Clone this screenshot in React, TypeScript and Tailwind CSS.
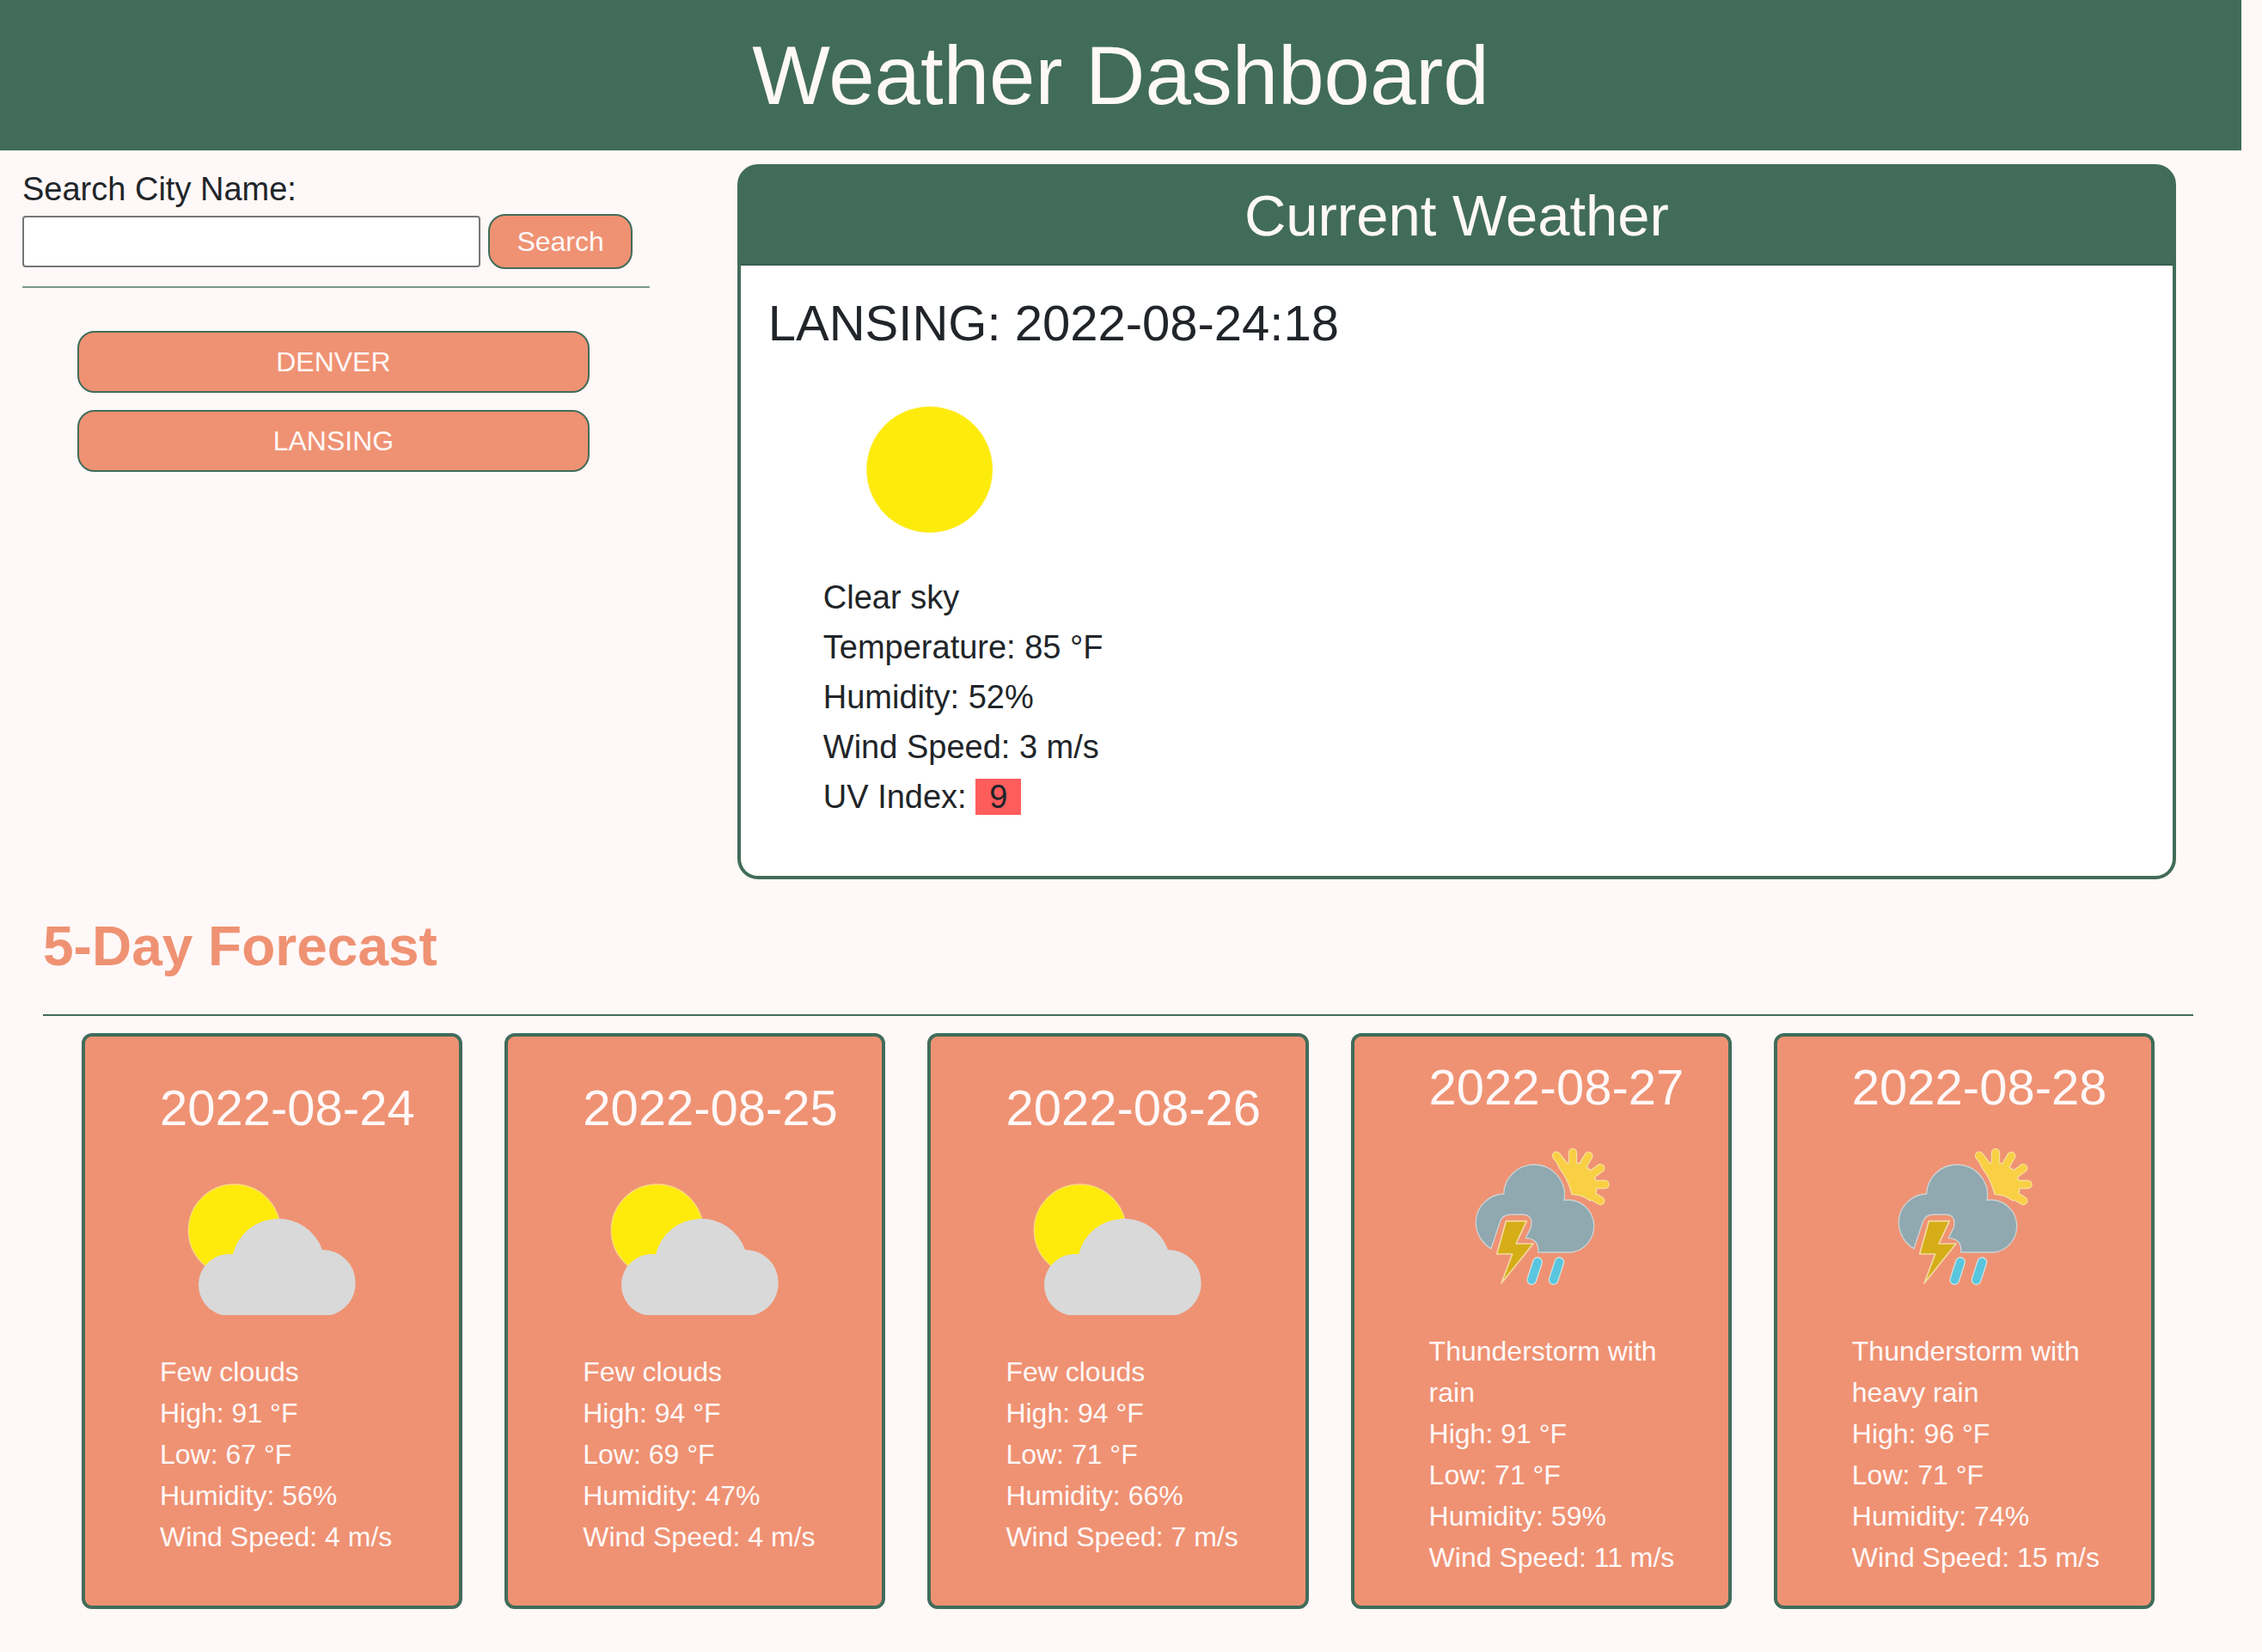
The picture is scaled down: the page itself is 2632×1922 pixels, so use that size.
import React from "react";

type Kind = "clear" | "few" | "storm";

type Day = {
  date: string;
  kind: Kind;
  summary: string;
  high: number;
  low: number;
  humidity: number;
  wind: number;
};

const cities = ["DENVER", "LANSING"];

const days: Day[] = [
  { date: "2022-08-24", kind: "few", summary: "Few clouds", high: 91, low: 67, humidity: 56, wind: 4 },
  { date: "2022-08-25", kind: "few", summary: "Few clouds", high: 94, low: 69, humidity: 47, wind: 4 },
  { date: "2022-08-26", kind: "few", summary: "Few clouds", high: 94, low: 71, humidity: 66, wind: 7 },
  { date: "2022-08-27", kind: "storm", summary: "Thunderstorm with rain", high: 91, low: 71, humidity: 59, wind: 11 },
  { date: "2022-08-28", kind: "storm", summary: "Thunderstorm with heavy rain", high: 96, low: 71, humidity: 74, wind: 15 },
];

function WeatherIcon({ kind }: { kind: Kind }) {
  return (
    <svg viewBox="0 0 720 720" className="block size-60" role="img" aria-label={kind}>
      {kind === "clear" && <circle cx="371" cy="361" r="220" fill="#fdeb0c" stroke="#fdf28a" strokeWidth="2" />}
      {kind === "few" && (
        <>
          <circle cx="260" cy="298" r="160" fill="#feeb0b" stroke="#f9dc7c" strokeWidth="4" />
          <path
            d="M218 594 A108 108 0 0 1 135 488 A106 106 0 0 1 255 382 A163 163 0 0 1 567 366 A115 115 0 0 1 683 480 A115 115 0 0 1 597 594 Z"
            fill="#d9d9d9"
          />
        </>
      )}
      {kind === "storm" && (
        <>
          <g stroke="#f6dfa0" strokeWidth="31" strokeLinecap="round">
            <path d="M444 110 L490 170 M501 99 V150 M556 111 L530 155 M598 153 L560 180 M614 210 H560 M598 267 L560 245" />
          </g>
          <path
            d="M440 122 L484 136 A84 84 0 0 1 582 196 A84 84 0 0 1 575 258 L562 267 Q532 245 498 245 Q484 190 455 154 Z"
            fill="#f9d044"
            stroke="#f6dfa0"
            strokeWidth="4"
          />
          <g stroke="#f9d044" strokeWidth="24" strokeLinecap="round">
            <path d="M444 110 L490 170 M501 99 V150 M556 111 L530 155 M598 153 L560 180 M614 210 H560 M598 267 L560 245" />
          </g>
          <path
            d="M216 434 A106 106 0 0 1 163 343 A100 100 0 0 1 260 243 A106 106 0 0 1 365 141 A106 106 0 0 1 471 265 A91 91 0 0 1 575 355 A92 92 0 0 1 498 447 H380 Q384 400 337 397 L355 360 Q364 318 330 315 H285 Q254 315 246 344 Z"
            fill="#90a8b0"
            stroke="#ccd3d4"
            strokeWidth="4"
          />
          <path
            d="M268 338 H340 L303 417 H363 L252 555 L290 453 H236 Z"
            fill="#d5ae17"
            stroke="#f3d9a4"
            strokeWidth="5"
            strokeLinejoin="round"
          />
          <path d="M378 481 L358 543 M454 481 L434 543" stroke="#cfe0dc" strokeWidth="36" strokeLinecap="round" />
          <path d="M378 481 L358 543 M454 481 L434 543" stroke="#58c6de" strokeWidth="28" strokeLinecap="round" />
        </>
      )}
    </svg>
  );
}

function DayCard({ day }: { day: Day }) {
  return (
    <article className="flex flex-col justify-center rounded-xl border-4 border-[#416c5a] bg-[#ef9273] pt-6 pr-8 pb-8 pl-[87px] text-[32px] leading-[48px] text-[#fff8f8]">
      <h3 className="mb-2 text-[58px] leading-[70px] whitespace-nowrap">{day.date}</h3>
      <WeatherIcon kind={day.kind} />
      <p>{day.summary}</p>
      <p>High: {day.high} °F</p>
      <p>Low: {day.low} °F</p>
      <p>Humidity: {day.humidity}%</p>
      <p>Wind Speed: {day.wind} m/s</p>
    </article>
  );
}

export default function App() {
  return (
    <div className="min-h-screen bg-[#fff8f8] pb-12 font-['Liberation_Sans',Arial,sans-serif] text-[#212529]">
      <header className="mr-6 bg-[#416c5a] py-[30px] text-center text-[#fff8f8]">
        <h1 className="text-[96px] leading-[115px]">Weather Dashboard</h1>
      </header>

      <main>
        <div className="grid grid-cols-[17fr_39fr] gap-[102px] pt-4 pr-[100px] pl-[26px]">
          <aside>
            <form onSubmit={(e) => e.preventDefault()}>
              <label htmlFor="city" className="block text-[38px] leading-[58px]">
                Search City Name:
              </label>
              <div className="flex items-center gap-[9px] pr-5">
                <input
                  id="city"
                  type="text"
                  className="h-[60px] min-w-0 flex-1 rounded-[4px] border-2 border-[#767676] bg-white px-2 text-[32px]"
                />
                <button
                  type="submit"
                  className="rounded-[20px] border-2 border-[#416c5a] bg-[#ef9273] px-[31px] py-1.5 text-[32px] leading-[48px] text-[#fff8f8]"
                >
                  Search
                </button>
              </div>
            </form>
            <hr className="mt-5 border-t-2 border-[#7a998c]" />
            <div className="mt-[50px] flex flex-col gap-5 pr-[70px] pl-16">
              {cities.map((city) => (
                <button
                  key={city}
                  type="button"
                  className="rounded-[20px] border-2 border-[#416c5a] bg-[#ef9273] py-2.5 text-[32px] leading-[48px] text-[#fff8f8]"
                >
                  {city}
                </button>
              ))}
            </div>
          </aside>

          <section className="rounded-3xl border-4 border-[#416c5a] bg-[#416c5a]">
            <h2 className="border-b-2 border-[#385c4d] py-4 text-center text-[67px] leading-[80px] text-[#fff8f8]">
              Current Weather
            </h2>
            <div className="rounded-b-[20px] bg-white p-8 pb-[63px]">
              <h3 className="mb-4 text-[58px] leading-[69px]">LANSING: 2022-08-24:18</h3>
              <div className="pl-16 text-[38px] leading-[58px]">
                <WeatherIcon kind="clear" />
                <p>Clear sky</p>
                <p>Temperature: 85 °F</p>
                <p>Humidity: 52%</p>
                <p>Wind Speed: 3 m/s</p>
                <p>
                  UV Index: <span className="bg-[#ff5c5c] px-4">9</span>
                </p>
              </div>
            </div>
          </section>
        </div>

        <section className="mt-10 pr-20 pl-[50px]">
          <h2 className="text-[64px] leading-[77px] font-bold text-[#ef9273]">5-Day Forecast</h2>
          <hr className="mt-10 border-t-2 border-[#416c5a]" />
          <div className="mt-5 grid grid-cols-5 gap-[49px] px-[45px]">
            {days.map((day) => (
              <DayCard key={day.date} day={day} />
            ))}
          </div>
        </section>
      </main>
    </div>
  );
}
